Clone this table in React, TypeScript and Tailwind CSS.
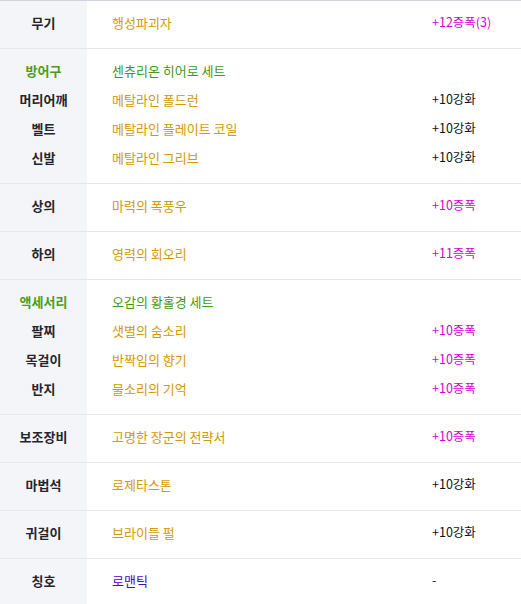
import React from "react";

type Line = { label: string; labelColor?: string; value: string; valueColor: string; extra?: string; extraColor?: string };

const GOLD = "text-[#d09a00]";
const GREEN = "text-[#3f9a16]";
const MAG = "text-[#d800d8]";
const BLK = "text-[#111111]";

const groups: Line[][] = [
  [{ label: "무기", value: "행성파괴자", valueColor: GOLD, extra: "+12증폭(3)", extraColor: MAG }],
  [
    { label: "방어구", labelColor: "text-[#4a9e1c]", value: "센츄리온 히어로 세트", valueColor: GREEN },
    { label: "머리어깨", value: "메탈라인 폴드런", valueColor: GOLD, extra: "+10강화", extraColor: BLK },
    { label: "벨트", value: "메탈라인 플레이트 코일", valueColor: GOLD, extra: "+10강화", extraColor: BLK },
    { label: "신발", value: "메탈라인 그리브", valueColor: GOLD, extra: "+10강화", extraColor: BLK },
  ],
  [{ label: "상의", value: "마력의 폭풍우", valueColor: GOLD, extra: "+10증폭", extraColor: MAG }],
  [{ label: "하의", value: "영력의 회오리", valueColor: GOLD, extra: "+11증폭", extraColor: MAG }],
  [
    { label: "액세서리", labelColor: "text-[#4a9e1c]", value: "오감의 황홀경 세트", valueColor: GREEN },
    { label: "팔찌", value: "샛별의 숨소리", valueColor: GOLD, extra: "+10증폭", extraColor: MAG },
    { label: "목걸이", value: "반짝임의 향기", valueColor: GOLD, extra: "+10증폭", extraColor: MAG },
    { label: "반지", value: "물소리의 기억", valueColor: GOLD, extra: "+10증폭", extraColor: MAG },
  ],
  [{ label: "보조장비", value: "고명한 장군의 전략서", valueColor: GOLD, extra: "+10증폭", extraColor: MAG }],
  [{ label: "마법석", value: "로제타스톤", valueColor: GOLD, extra: "+10강화", extraColor: BLK }],
  [{ label: "귀걸이", value: "브라이들 펄", valueColor: GOLD, extra: "+10강화", extraColor: BLK }],
  [{ label: "칭호", value: "로맨틱", valueColor: "text-[#5000c8]", extra: "-", extraColor: BLK }],
];

export default function App() {
  return (
    <div
      className="w-[521px] h-[604px] overflow-hidden bg-white border-t border-[#cfd3dc]"
      style={{ fontFamily: '"Noto Sans CJK KR", "Noto Sans", sans-serif' }}
    >
      {groups.map((g, gi) => (
        <div key={gi} className="flex border-b border-[#e6e6e8]">
          <div className="w-[87px] shrink-0 bg-[#f4f5f9] pt-[7px] pb-[11px]">
            {g.map((l, i) => (
              <div
                key={i}
                className={`h-[29px] flex items-center justify-center text-[13px] font-bold ${l.labelColor ?? "text-[#25252d]"}`}
              >
                {l.label}
              </div>
            ))}
          </div>
          <div className="flex-1 pt-[7px] pb-[11px]">
            {g.map((l, i) => (
              <div key={i} className="h-[29px] flex items-center">
                <div className={`w-[345px] pl-[25px] text-[13px] ${l.valueColor}`}>{l.value}</div>
                <div className={`text-[12.5px] ${l.extraColor}`}>{l.extra ?? ""}</div>
              </div>
            ))}
          </div>
        </div>
      ))}
    </div>
  );
}
